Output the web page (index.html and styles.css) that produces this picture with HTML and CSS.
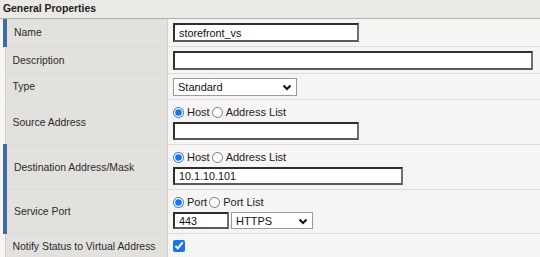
FILE: index.html
```html
<!DOCTYPE html>
<html lang="en">
<head>
    <meta charset="UTF-8">
    <title>General Properties</title>
    <link rel="stylesheet" href="styles.css">
</head>
<body>
    <div class="section-title">General Properties</div>

    <table class="props">
        <tr class="row-name">
            <td class="label required">Name</td>
            <td class="value"><input type="text" class="field w-name" value="storefront_vs"></td>
        </tr>
        <tr class="row-desc">
            <td class="label">Description</td>
            <td class="value"><input type="text" class="field w-desc" value=""></td>
        </tr>
        <tr class="row-type">
            <td class="label">Type</td>
            <td class="value">
                <span class="select-wrap w-type">
                    <select class="dropdown">
                        <option>Standard</option>
                    </select>
                    <svg class="chevron" width="10" height="7" viewBox="0 0 10 7"><path d="M1.5 1.5 L5 5 L8.5 1.5" fill="none" stroke="#111" stroke-width="2"/></svg>
                </span>
            </td>
        </tr>
        <tr class="row-multi">
            <td class="label">Source Address</td>
            <td class="value">
                <div class="choice">
                    <label><input type="radio" name="src" checked>Host</label>
                    <label><input type="radio" name="src">Address List</label>
                </div>
                <input type="text" class="field field-sm w-name" value="">
            </td>
        </tr>
        <tr class="row-multi">
            <td class="label required">Destination Address/Mask</td>
            <td class="value">
                <div class="choice">
                    <label><input type="radio" name="dst" checked>Host</label>
                    <label><input type="radio" name="dst">Address List</label>
                </div>
                <input type="text" class="field field-sm w-dest" value="10.1.10.101">
            </td>
        </tr>
        <tr class="row-port">
            <td class="label required">Service Port</td>
            <td class="value">
                <div class="choice">
                    <label><input type="radio" name="port" checked>Port</label>
                    <label><input type="radio" name="port">Port List</label>
                </div>
                <div class="port-line">
                    <input type="text" class="field field-xs w-port" value="443">
                    <span class="select-wrap w-proto">
                        <select class="dropdown">
                            <option>HTTPS</option>
                        </select>
                        <svg class="chevron" width="10" height="7" viewBox="0 0 10 7"><path d="M1.5 1.5 L5 5 L8.5 1.5" fill="none" stroke="#111" stroke-width="2"/></svg>
                    </span>
                </div>
            </td>
        </tr>
        <tr class="row-notify">
            <td class="label">Notify Status to Virtual Address</td>
            <td class="value"><input type="checkbox" class="check" checked></td>
        </tr>
    </table>
</body>
</html>
```

FILE: styles.css
```css
body {
    margin: 0;
    background: #f6f5f3;
    font-family: "Liberation Sans", Arial, sans-serif;
    font-size: 10.4px;
    color: #2a2a2a;
}

.section-title {
    height: 18px;
    line-height: 17px;
    padding-left: 3px;
    background: #ebe9e6;
    border-bottom: 1px solid #b3b1ae;
    font-weight: bold;
    color: #222;
}

.props {
    border-collapse: collapse;
    margin-left: 3px;
    width: calc(100% - 3px);
}

.props td {
    border-bottom: 1px solid #dddbd7;
    padding: 0;
    vertical-align: middle;
}

.label {
    width: 153px;
    padding-left: 7px !important;
    background: #e3e1dd;
    border-left: 1px solid #cfcdc9;
    border-right: 1px solid #cfcdc9;
}

.label.required {
    border-left: 4px solid #3d6e9f;
    padding-left: 7px !important;
}

.value {
    padding-left: 5px !important;
    background: #f6f5f3;
}

.row-name td { height: 27px; }
.row-desc td { height: 26px; }
.row-type td { height: 25px; }
.row-multi td { height: 44px; }
.row-port td { height: 43px; }
.row-notify td { height: 24px; }

.field {
    box-sizing: border-box;
    height: 19px;
    margin: 0;
    padding: 0 4px;
    font: inherit;
    font-size: 10.8px;
    color: #111;
    background: #fff;
    border: 2px solid;
    border-color: #2e2e2e #6f6f6f #5a5a5a #2e2e2e;
    border-radius: 0;
    outline: none;
    display: block;
}

.field-sm { height: 18px; }
.field-xs { height: 17px; }

.w-name { width: 186px; }
.w-desc { width: 360px; }
.w-dest { width: 230px; }
.w-port { width: 56px; }

.select-wrap {
    position: relative;
    display: inline-block;
}

.w-type { width: 124px; }
.w-proto { width: 82px; }

.dropdown {
    -webkit-appearance: none;
    appearance: none;
    box-sizing: border-box;
    width: 100%;
    height: 18px;
    margin: 0;
    padding: 0 4px;
    font: inherit;
    font-size: 11px;
    color: #111;
    background: #fff;
    border: 1px solid #9a9a9a;
    border-radius: 0;
    display: block;
}

.w-proto .dropdown { height: 17px; }

.chevron {
    position: absolute;
    right: 5px;
    top: 6px;
    pointer-events: none;
}

.choice {
    display: flex;
    align-items: center;
    height: 16px;
    margin-bottom: 2px;
}

.choice label {
    display: flex;
    align-items: center;
    font-size: 11px;
    color: #222;
}

.choice input[type="radio"] {
    width: 11px;
    height: 11px;
    margin: 0 3px 0 0;
    accent-color: #1a73e8;
}

.choice label + label input[type="radio"] {
    margin-left: 2px;
}

.port-line {
    display: flex;
    gap: 2px;
}

.check {
    width: 12px;
    height: 12px;
    margin: 0;
    display: block;
    accent-color: #1a73e8;
}
```
